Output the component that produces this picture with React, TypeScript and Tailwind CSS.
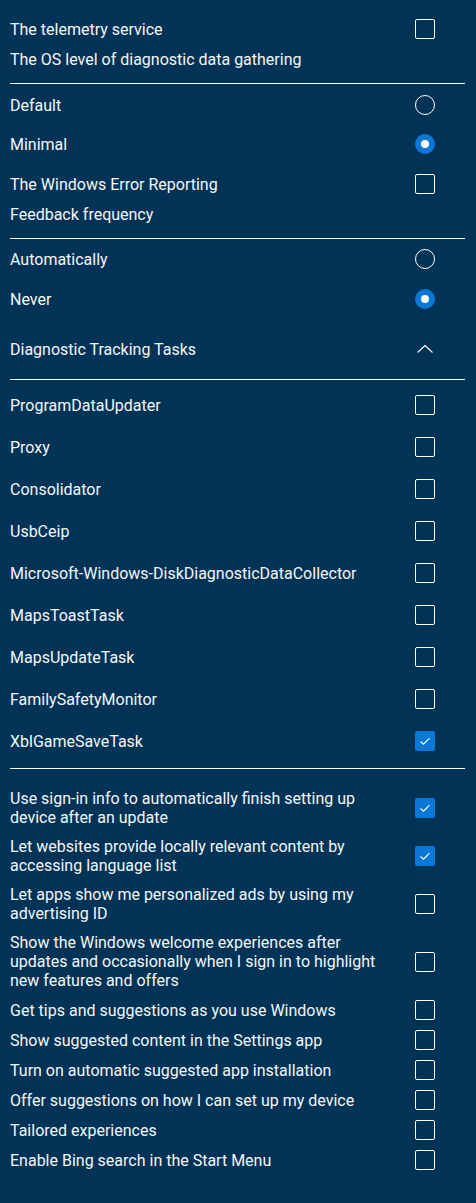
import React from 'react';
import { clsx } from 'clsx';

function Checkbox({ checked }: { checked?: boolean }) {
  return (
    <div
      className={clsx(
        'flex h-5 w-5 shrink-0 items-center justify-center rounded-[2px]',
        checked ? 'bg-[#0a78d6]' : 'border border-white'
      )}
    >
      {checked && (
        <svg width="14" height="14" viewBox="0 0 14 14" fill="none">
          <path d="M2.5 7.5 L5.5 10.2 L11.5 4.2" stroke="white" strokeWidth="1.1" />
        </svg>
      )}
    </div>
  );
}

function Radio({ checked }: { checked?: boolean }) {
  return checked ? (
    <div className="flex h-5 w-5 shrink-0 items-center justify-center rounded-full bg-[#0a78d6]">
      <div className="h-2 w-2 rounded-full bg-white" />
    </div>
  ) : (
    <div className="h-5 w-5 shrink-0 rounded-full border border-white" />
  );
}

function Row({ label, control, className }: { label: string; control?: React.ReactNode; className?: string }) {
  return (
    <div className={clsx('flex min-h-5 items-center pr-[30px]', className)}>
      <div className="flex-1 pr-5 leading-[19px]">{label}</div>
      {control}
    </div>
  );
}

function Divider({ className }: { className?: string }) {
  return <div className={clsx('h-px bg-white', className)} />;
}

const tasks: [string, boolean][] = [
  ['ProgramDataUpdater', false],
  ['Proxy', false],
  ['Consolidator', false],
  ['UsbCeip', false],
  ['Microsoft-Windows-DiskDiagnosticDataCollector', false],
  ['MapsToastTask', false],
  ['MapsUpdateTask', false],
  ['FamilySafetyMonitor', false],
  ['XblGameSaveTask', true],
];

const privacy: [string, boolean][] = [
  ['Use sign-in info to automatically finish setting up device after an update', true],
  ['Let websites provide locally relevant content by accessing language list', true],
  ['Let apps show me personalized ads by using my advertising ID', false],
  ['Show the Windows welcome experiences after updates and occasionally when I sign in to highlight new features and offers', false],
  ['Get tips and suggestions as you use Windows', false],
  ['Show suggested content in the Settings app', false],
  ['Turn on automatic suggested app installation', false],
  ['Offer suggestions on how I can set up my device', false],
  ['Tailored experiences', false],
  ['Enable Bing search in the Start Menu', false],
];

export default function App() {
  return (
    <div
      className="min-h-[1203px] w-[476px] bg-[#013356] pl-[10px] pr-[11px] pt-[19px] text-[16px] text-[#f4f6f8]"
      style={{ fontFamily: 'Roboto, "Liberation Sans", sans-serif' }}
    >
      <Row label="The telemetry service" control={<Checkbox />} />
      <Row label="The OS level of diagnostic data gathering" className="mt-[10px] h-5" />
      <Divider className="mt-[14px]" />
      <Row label="Default" control={<Radio />} className="mt-[11px]" />
      <Row label="Minimal" control={<Radio checked />} className="mt-[19px]" />
      <Row label="The Windows Error Reporting" control={<Checkbox />} className="mt-[20px]" />
      <Row label="Feedback frequency" className="mt-[10px] h-5" />
      <Divider className="mt-[14px]" />
      <Row label="Automatically" control={<Radio />} className="mt-[10px]" />
      <Row label="Never" control={<Radio checked />} className="mt-[20px]" />
      <Row
        label="Diagnostic Tracking Tasks"
        className="mt-[30px] h-5"
        control={
          <div className="flex h-5 w-5 shrink-0 items-center justify-center">
            <svg width="18" height="10" viewBox="0 0 18 10" fill="none">
              <path d="M1.5 8.5 L9 1.5 L16.5 8.5" stroke="white" strokeWidth="1.1" />
            </svg>
          </div>
        }
      />
      <Divider className="mt-[20px]" />
      <div className="mt-[15px] flex flex-col gap-[22px]">
        {tasks.map(([name, checked]) => (
          <Row key={name} label={name} control={<Checkbox checked={checked} />} />
        ))}
      </div>
      <Divider className="mt-[17px]" />
      <div className="mt-[20px] flex flex-col gap-[10px]">
        {privacy.map(([name, checked]) => (
          <Row key={name} label={name} control={<Checkbox checked={checked} />} />
        ))}
      </div>
    </div>
  );
}
